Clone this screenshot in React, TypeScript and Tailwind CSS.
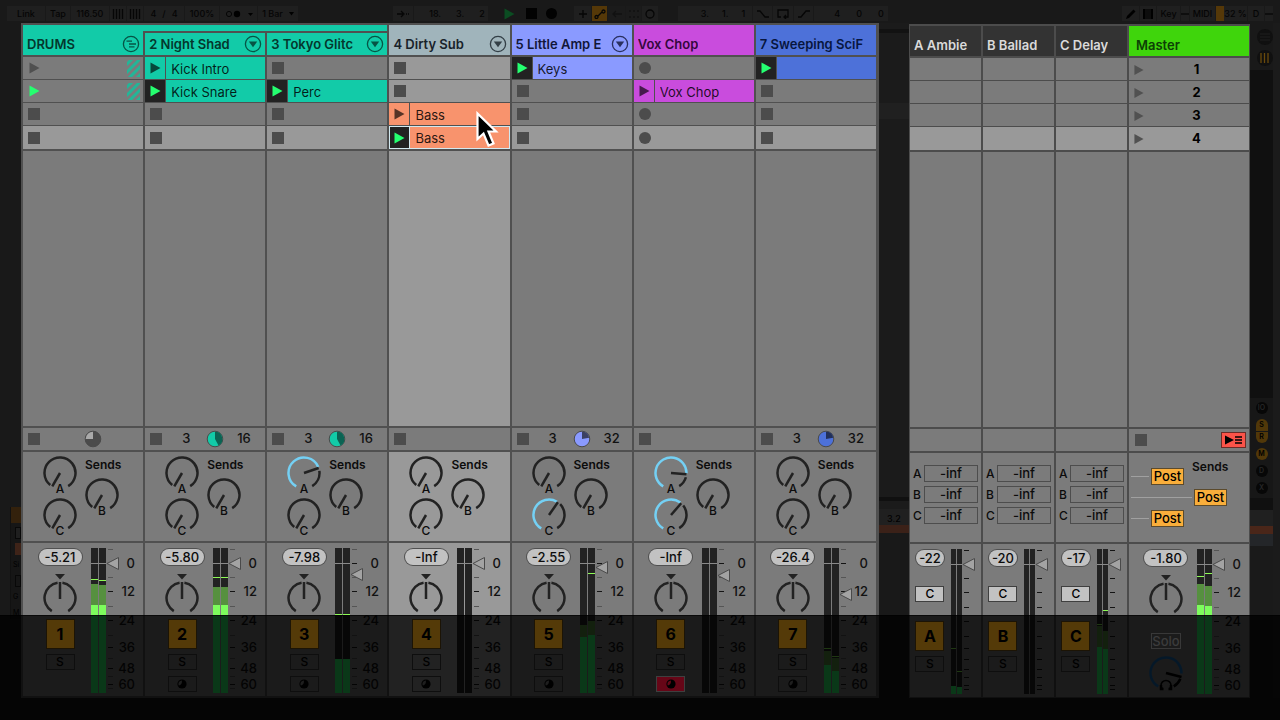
import type { ReactNode } from 'react';
import { clsx } from 'clsx';

type Bar = { peak?: number; mid?: number; main?: number };

type SlotData =
    | { kind: 'stop' }
    | { kind: 'record' }
    | { kind: 'group'; playing: boolean }
    | { kind: 'clip'; name: string; playing: boolean; selected?: boolean; hovered?: boolean };

type Track = {
    name: string;
    number: string;
    head: string;
    headText: string;
    clip: string;
    icon?: 'group' | 'fold';
    grouped?: boolean;
    active?: boolean;
    slots: SlotData[];
    pie?: { fill: string; back: string; portion: number; left?: string; right?: string };
    sends: [number, number, number];
    volume: string;
    handle: number;
    bars: [Bar, Bar];
    monitor?: 'off' | 'armed';
};

const STOP: SlotData = { kind: 'stop' };
const RECORD: SlotData = { kind: 'record' };
const MIN = -150;

const TRACKS: Track[] = [
    {
        name: 'DRUMS',
        number: '1',
        head: 'bg-[#12cba8]',
        headText: 'text-[#04372d]',
        clip: 'bg-[#12cba8]',
        icon: 'group',
        slots: [{ kind: 'group', playing: false }, { kind: 'group', playing: true }, STOP, STOP],
        pie: { fill: '#a9a9a9', back: '#4b4b4b', portion: -0.25 },
        sends: [MIN, MIN, MIN],
        volume: '-5.21',
        handle: 20,
        bars: [{ peak: 36, mid: 41, main: 62 }, { peak: 37, mid: 42, main: 62 }],
    },
    {
        name: '2 Night Shad',
        number: '2',
        head: 'bg-[#12cba8]',
        headText: 'text-[#04372d]',
        clip: 'bg-[#12cba8]',
        icon: 'fold',
        grouped: true,
        slots: [{ kind: 'clip', name: 'Kick Intro', playing: false }, { kind: 'clip', name: 'Kick Snare', playing: true }, STOP, STOP],
        pie: { fill: '#0b6353', back: '#12cba8', portion: 0.42, left: '3', right: '16' },
        sends: [MIN, MIN, MIN],
        volume: '-5.80',
        handle: 20,
        bars: [{ peak: 34, mid: 44, main: 62 }, { peak: 34, mid: 44, main: 62 }],
        monitor: 'off',
    },
    {
        name: '3 Tokyo Glitc',
        number: '3',
        head: 'bg-[#12cba8]',
        headText: 'text-[#04372d]',
        clip: 'bg-[#12cba8]',
        icon: 'fold',
        grouped: true,
        slots: [STOP, { kind: 'clip', name: 'Perc', playing: true }, STOP, STOP],
        pie: { fill: '#0b6353', back: '#12cba8', portion: 0.42, left: '3', right: '16' },
        sends: [71, MIN, MIN],
        volume: '-7.98',
        handle: 31,
        bars: [{ peak: 71, main: 116 }, { peak: 71, main: 116 }],
        monitor: 'off',
    },
    {
        name: '4 Dirty Sub',
        number: '4',
        head: 'bg-[#a0b4bb]',
        headText: 'text-[#18222a]',
        clip: 'bg-[#f8936d]',
        icon: 'fold',
        active: true,
        slots: [
            STOP,
            STOP,
            { kind: 'clip', name: 'Bass', playing: false, hovered: true },
            { kind: 'clip', name: 'Bass', playing: true, selected: true },
        ],
        sends: [MIN, MIN, MIN],
        volume: '-Inf',
        handle: 20,
        bars: [{}, {}],
        monitor: 'off',
    },
    {
        name: '5 Little Amp E',
        number: '5',
        head: 'bg-[#8a9aff]',
        headText: 'text-[#111638]',
        clip: 'bg-[#8a9aff]',
        icon: 'fold',
        slots: [{ kind: 'clip', name: 'Keys', playing: true }, STOP, STOP, STOP],
        pie: { fill: '#3c4163', back: '#8a9aff', portion: 0.22, left: '3', right: '32' },
        sends: [MIN, MIN, 35],
        volume: '-2.55',
        handle: 24,
        bars: [{ mid: 82, main: 94 }, { peak: 30, mid: 78, main: 92 }],
        monitor: 'off',
    },
    {
        name: 'Vox Chop',
        number: '6',
        head: 'bg-[#c94cdd]',
        headText: 'text-[#35083d]',
        clip: 'bg-[#c94cdd]',
        slots: [RECORD, { kind: 'clip', name: 'Vox Chop', playing: false }, RECORD, RECORD],
        sends: [95, MIN, 41],
        volume: '-Inf',
        handle: 32,
        bars: [{}, {}],
        monitor: 'armed',
    },
    {
        name: '7 Sweeping SciF',
        number: '7',
        head: 'bg-[#4d71d9]',
        headText: 'text-[#07163f]',
        clip: 'bg-[#4d71d9]',
        slots: [{ kind: 'clip', name: '', playing: true }, STOP, STOP, STOP],
        pie: { fill: '#22305a', back: '#4d71d9', portion: 0.22, left: '3', right: '32' },
        sends: [MIN, MIN, MIN],
        volume: '-26.4',
        handle: 51,
        bars: [{ peak: 105, mid: 108, main: 122 }, { peak: 113, mid: 115, main: 128 }],
        monitor: 'off',
    },
];

const RETURNS: { letter: string; name: string; volume: string; bars: [Bar, Bar] }[] = [
    { letter: 'A', name: 'A Ambie', volume: '-22', bars: [{ peak: 104, main: 142 }, { peak: 127, main: 143 }] },
    { letter: 'B', name: 'B Ballad', volume: '-20', bars: [{}, {}] },
    { letter: 'C', name: 'C Delay', volume: '-17', bars: [{ peak: 80, mid: 82, main: 103 }, { peak: 66, mid: 87, main: 105 }] },
];

const MAJOR = [
    { y: 20, label: '0' },
    { y: 48, label: '12' },
    { y: 77, label: '24' },
    { y: 104, label: '36' },
    { y: 125, label: '48' },
    { y: 141, label: '60' },
];
const MINOR = [6, 34, 63, 92, 115, 133, 145];

function point(cx: number, cy: number, r: number, deg: number) {
    const a = (deg * Math.PI) / 180;
    return `${(cx + r * Math.sin(a)).toFixed(2)} ${(cy - r * Math.cos(a)).toFixed(2)}`;
}

function arc(cx: number, cy: number, r: number, from: number, to: number) {
    return `M${point(cx, cy, r, from)}A${r} ${r} 0 ${to - from > 180 ? 1 : 0} 1 ${point(cx, cy, r, to)}`;
}

function Play({ className }: { className?: string }) {
    return (
        <svg width="11" height="12" viewBox="0 0 11 12" className={className} aria-hidden="true">
            <path d="M0.5 0.5L10.5 6L0.5 11.5Z" fill="currentColor" />
        </svg>
    );
}

function SendKnob({ letter, angle, owner }: { letter: string; angle: number; owner: string }) {
    const min = angle === MIN;
    return (
        <label className="relative block h-[42px] w-[34px]">
            <svg width="34" height="42" viewBox="0 0 34 42" fill="none" strokeWidth="2.5">
                {!min && <path d={arc(17, 17, 15.5, MIN, angle - 4)} stroke="#74d0f4" />}
                <path d={arc(17, 17, 15.5, min ? -141 : angle + 11, 148)} stroke="#222" />
                <path d={`M17 17L${point(17, 17, 15.5, angle)}`} stroke="#222" />
                <text x="17" y="37" textAnchor="middle" fontSize="12" fontWeight="500" fill="#0c0c0c">{letter}</text>
            </svg>
            <input type="range" min={-150} max={150} defaultValue={angle} aria-label={`${owner} send ${letter}`} className="absolute inset-0 h-full w-full opacity-0" />
        </label>
    );
}

function PanKnob({ owner }: { owner: string }) {
    return (
        <label className="relative mt-1.5 block h-11 w-[34px]">
            <svg width="34" height="44" viewBox="0 0 34 44" fill="none" strokeWidth="2.5">
                <path d="M12 3H22L17 8.5Z" fill="#222" />
                <path d={arc(17, 27, 15.5, -148, -9)} stroke="#222" />
                <path d={arc(17, 27, 15.5, 9, 148)} stroke="#222" />
                <path d="M17 28V11" stroke="#222" />
            </svg>
            <input type="range" min={-50} max={50} defaultValue={0} aria-label={`${owner} pan`} className="absolute inset-0 h-full w-full opacity-0" />
        </label>
    );
}

function Meter({ bars, handle, narrow = false }: { bars: [Bar, Bar]; handle: number; narrow?: boolean }) {
    const w = narrow ? 5 : 7;
    const edge = narrow ? 12 : 16;
    return (
        <svg width={narrow ? 26 : 46} height="153" viewBox={`0 0 ${narrow ? 26 : 46} 153`} className="shrink-0">
            {bars.map((bar, i) => {
                const x = i * (w + 1);
                return (
                    <g key={i}>
                        <rect x={x} y="5" width={w} height="145" fill="#222" />
                        {bar.mid && <rect x={x} y={bar.mid} width={w} height={150 - bar.mid} fill="#56903f" />}
                        {bar.main && <rect x={x} y={bar.main} width={w} height={150 - bar.main} fill="#30ff70" />}
                        {bar.main && bar.main < 72 && <rect x={x} y={bar.main} width={w} height={72 - bar.main} fill="#7dfd5d" />}
                        {bar.peak && <rect x={x} y={bar.peak} width={w} height="1" fill="#8dfb55" />}
                    </g>
                );
            })}
            <rect x="0" y="20" width={edge - 1} height="1" fill="#8a8a8a" />
            {MINOR.map((y) => (
                <rect key={y} x={edge + 1} y={y} width="5" height="1" fill={narrow ? '#141414' : '#555'} />
            ))}
            {MAJOR.map((t) => (
                <g key={t.y}>
                    <rect x={edge + 1} y={t.y} width="5" height="1" fill="#141414" />
                    {!narrow && (
                        <text x="44" y={t.y + 5} textAnchor="end" fontSize="13" fontWeight="500" fill="#111">{t.label}</text>
                    )}
                </g>
            ))}
            <path d={`M${edge} ${handle + 0.5}L${edge + 11.5} ${handle - 5.5}V${handle + 6.5}Z`} fill="#a3a3a3" stroke="#4a4a4a" />
        </svg>
    );
}

function Slot({ slot, track, lit }: { slot: SlotData; track: Track; lit: boolean }) {
    const bg = lit ? 'bg-[#999]' : 'bg-[#7b7b7b]';
    if (slot.kind === 'clip') {
        return (
            <div className={clsx('relative flex h-full w-full gap-px', slot.selected && 'border border-[#d2e9f0] bg-[#d2e9f0]')}>
                <button
                    aria-label={`Launch ${slot.name || track.name}`}
                    className={clsx('flex h-full items-center', slot.selected ? 'w-[19px] pl-1' : 'w-5 pl-[5px]', slot.playing ? 'bg-[#222] text-[#25ff70]' : `${track.clip} text-black/65`)}
                >
                    <Play />
                </button>
                <button className={clsx('flex h-full min-w-0 flex-1 items-center pt-px pl-[5px] text-[13px] leading-5 text-black/85', track.clip)}>
                    <span className="truncate">{slot.name}</span>
                </button>
                {slot.hovered && (
                    <svg width="24" height="38" viewBox="0 0 24 38" className="absolute top-2 left-[86px] z-10" aria-hidden="true">
                        <path d="M2.5 2.5V28L8.5 22.5L13.5 34.5L18.5 32.5L13.5 20.5H21Z" fill="#000" stroke="#fff" strokeWidth="2.2" />
                    </svg>
                )}
            </div>
        );
    }
    return (
        <button
            aria-label={slot.kind === 'group' ? 'Launch group' : slot.kind === 'record' ? 'Record' : 'Stop'}
            className={clsx('flex h-full w-full items-center pl-[5px]', bg)}
        >
            {slot.kind === 'stop' && <span className="h-3 w-3 bg-[#4c4c4c]" />}
            {slot.kind === 'record' && <span className="h-3 w-3 rounded-full bg-[#4c4c4c]" />}
            {slot.kind === 'group' && (
                <>
                    {slot.playing ? <Play className="ml-px text-[#25ff70]" /> : <Play className="ml-px text-[#505050]" />}
                    <svg width="13" height="17" viewBox="0 0 13 17" className="mr-[3px] ml-auto" aria-hidden="true">
                        <path d="M-2 6L6 -2M-2 14L14 -2M-2 22L16 4M-2 30L16 12" stroke="#22b698" strokeWidth="3" />
                    </svg>
                </>
            )}
        </button>
    );
}

function HeaderIcon({ kind }: { kind: 'group' | 'fold' }) {
    return (
        <svg width="18" height="18" viewBox="0 0 18 18" fill="none" stroke="currentColor" strokeWidth="1.3" className="opacity-80">
            <circle cx="9" cy="9" r="7.6" />
            {kind === 'group' ? (
                <path d="M4.5 6.2H10M7 9H14M7 11.8H12.5" />
            ) : (
                <path d="M4.8 6.5H13.2L9 12.3Z" fill="currentColor" stroke="none" />
            )}
        </svg>
    );
}

function Pie({ fill, back, portion }: { fill: string; back: string; portion: number }) {
    const [from, to] = portion < 0 ? [portion * 360, 0] : [0, portion * 360];
    return (
        <svg width="18" height="18" viewBox="0 0 18 18" aria-hidden="true">
            <circle cx="9" cy="9" r="7.8" fill={back} stroke="#4a4a4a" />
            <path d={`${arc(9, 9, 7.3, from, to)}L9 9Z`} fill={fill} />
        </svg>
    );
}

function Volume({ value, owner, small = false }: { value: string; owner: string; small?: boolean }) {
    return (
        <input
            aria-label={`${owner} volume`}
            defaultValue={value}
            className={clsx('mt-1.5 h-4 rounded-full bg-[#c2c2c2] pt-px text-center text-[13px] font-medium text-[#0c0c0c] ring-1 ring-[#505050]', small ? 'w-7' : 'w-[43px]')}
        />
    );
}

function SmallButton({ children, label, className }: { children: ReactNode; label: string; className?: string }) {
    return (
        <button aria-label={label} className={clsx('flex h-4 w-[29px] items-center justify-center border border-[#3f3f3f] text-xs font-medium text-black', className)}>
            {children}
        </button>
    );
}

// stays above the dimmed strip so the activators remain readable
function Activator({ children, className }: { children: ReactNode; className?: string }) {
    return (
        <button className={clsx('relative z-30 h-[30px] w-[29px] border border-[#1c1405] bg-[#543a08] text-base font-bold text-black', className)}>{children}</button>
    );
}

function TrackColumn({ track }: { track: Track }) {
    const cell = track.active ? 'bg-[#999]' : 'bg-[#7b7b7b]';
    return (
        <section className="flex min-w-0 flex-col gap-0.5">
            <div className="flex h-[30px] flex-col gap-0.5">
                {track.grouped && <div className="-ml-0.5 h-1.5 shrink-0 bg-[#12cba8]" />}
                <header className={clsx('flex min-h-0 flex-1 items-center justify-between pr-[3px] pl-1', track.head, track.headText, !track.grouped && 'pt-2')}>
                    <h2 className="min-w-0 truncate pt-0.5 text-[13px] font-semibold">{track.name}</h2>
                    {track.icon && (
                        <button aria-label={`Unfold ${track.name}`} className="shrink-0">
                            <HeaderIcon kind={track.icon} />
                        </button>
                    )}
                </header>
            </div>
            <ul className="flex flex-col gap-px">
                {track.slots.map((slot, i) => (
                    <li key={i} className={i === 3 ? 'h-[23px]' : 'h-[22px]'}>
                        <Slot slot={slot} track={track} lit={i === 3 || !!track.active} />
                    </li>
                ))}
            </ul>
            <div className={clsx('min-h-24 flex-1', cell)} />
            <div className="flex h-[22px] items-center bg-[#7b7b7b] pl-[5px] text-[13px] font-medium text-[#111]">
                <button aria-label={`Stop ${track.name}`} className="h-3 w-3 bg-[#4c4c4c]" />
                <span className="w-[44px] pl-5">{track.pie?.left}</span>
                {track.pie && <Pie {...track.pie} />}
                <span className="flex-1 pl-[13px]">{track.pie?.right}</span>
            </div>
            <div className={clsx('flex h-[89px] gap-2 pt-1 pl-5', cell)}>
                <div>
                    <SendKnob letter="A" angle={track.sends[0]} owner={track.name} />
                    <SendKnob letter="C" angle={track.sends[2]} owner={track.name} />
                </div>
                <div>
                    <h3 className="h-[22px] text-xs leading-[18px] font-semibold text-[#0c0c0c]">Sends</h3>
                    <SendKnob letter="B" angle={track.sends[1]} owner={track.name} />
                </div>
            </div>
            <div className={clsx('flex h-[153px] gap-[9px] pl-[15px]', cell)}>
                <div className="flex w-11 flex-col items-center">
                    <Volume value={track.volume} owner={track.name} />
                    <PanKnob owner={track.name} />
                    <Activator className="mt-1">{track.number}</Activator>
                    <SmallButton label={`Solo ${track.name}`} className="mt-[5px]">S</SmallButton>
                    {track.monitor && (
                        <SmallButton label={`Arm ${track.name}`} className={clsx('mt-1.5', track.monitor === 'armed' && 'relative z-30 border-[#1c0508] bg-[#660617]')}>
                            <svg width="10" height="10" viewBox="0 0 10 10">
                                <circle cx="5" cy="5" r="4.6" fill="#000" />
                                <path d="M5 1.5A3.5 3.5 0 0 0 1.8 6.5Q5 6 5 1.5Z" fill={track.monitor === 'armed' ? '#660617' : '#8a8a8a'} />
                            </svg>
                        </SmallButton>
                    )}
                </div>
                <Meter bars={track.bars} handle={track.handle} />
            </div>
        </section>
    );
}

function ReturnColumn({ letter, name, volume, bars }: (typeof RETURNS)[number]) {
    return (
        <section className="flex min-w-0 flex-col gap-0.5">
            <header className="flex h-[30px] items-center bg-[#333] pt-2.5 pl-1">
                <h2 className="truncate text-[13px] font-semibold text-[#dadada]">{name}</h2>
            </header>
            <ul className="flex flex-col gap-px">
                {[0, 1, 2, 3].map((i) => (
                    <li key={i} className={i === 3 ? 'h-[23px] bg-[#999]' : 'h-[22px] bg-[#7b7b7b]'} />
                ))}
            </ul>
            <div className="min-h-24 flex-1 bg-[#7b7b7b]" />
            <div className="h-[22px] bg-[#7b7b7b]" />
            <div className="flex h-[89px] flex-col gap-1 bg-[#7b7b7b] pt-3 pr-[3px] pl-[3px]">
                {['A', 'B', 'C'].map((send) => (
                    <label key={send} className="flex h-[17px] items-center justify-between text-xs font-medium text-[#0c0c0c]">
                        {send}
                        <input defaultValue="-inf" className="h-[17px] w-[54px] border border-[#4d4d4d] text-center text-[13px]" />
                    </label>
                ))}
            </div>
            <div className="flex h-[153px] gap-[7px] bg-[#7b7b7b] pl-1.5">
                <div className="flex w-7 flex-col items-center">
                    <Volume value={volume} owner={name} small />
                    <SmallButton label={`Crossfade ${name}`} className="mt-5 bg-[#c2c2c2]">C</SmallButton>
                    <Activator className="mt-[19px]">{letter}</Activator>
                    <SmallButton label={`Solo ${name}`} className="mt-[5px]">S</SmallButton>
                </div>
                <Meter bars={bars} handle={20} narrow />
            </div>
        </section>
    );
}

function Post() {
    return <button className="h-[17px] w-[33px] border border-[#5b4a2c] bg-[#f9ae3b] text-[13px] leading-none font-medium text-black">Post</button>;
}

function MasterColumn() {
    return (
        <section className="flex min-w-0 flex-col gap-0.5">
            <header className="flex h-[30px] items-center bg-[#3fd50c] pt-2.5 pl-[7px]">
                <h2 className="text-[13px] font-semibold text-[#0c4005]">Master</h2>
            </header>
            <ul className="flex flex-col gap-px">
                {[1, 2, 3, 4].map((scene) => (
                    <li key={scene} className={scene === 4 ? 'h-[23px] bg-[#999]' : 'h-[22px] bg-[#7b7b7b]'}>
                        <button className="flex h-full w-full items-center pt-px pl-[5px] text-[13px] font-bold text-black">
                            <Play className="text-[#515151]" />
                            <span className="w-[116px] text-center">{scene}</span>
                        </button>
                    </li>
                ))}
            </ul>
            <div className="min-h-24 flex-1 bg-[#7b7b7b]" />
            <div className="flex h-[22px] items-center justify-between bg-[#7b7b7b] pr-[3px] pl-1.5">
                <button aria-label="Stop all clips" className="h-3 w-3 bg-[#4c4c4c]" />
                <button aria-label="Back to arrangement" className="flex h-4 w-[25px] items-center justify-center border border-[#6c2a26] bg-[#fb5349]">
                    <svg width="18" height="10" viewBox="0 0 18 10">
                        <path d="M0 0.5L9 5L0 9.5Z" />
                        <path d="M10 2H17M10 5H17M10 8H17" stroke="#000" strokeWidth="1.4" />
                    </svg>
                </button>
            </div>
            <div className="flex h-[89px] flex-col gap-1 bg-[#7b7b7b] pt-[15px] pl-0.5">
                <div className="flex h-[17px] items-center gap-0.5">
                    <span className="h-px w-[18px] bg-[#a0a0a0]" />
                    <Post />
                    <h3 className="-mt-5 ml-1.5 text-xs font-semibold text-[#0c0c0c]">Sends</h3>
                </div>
                <div className="flex h-[17px] items-center gap-0.5">
                    <span className="h-px w-[61px] bg-[#a0a0a0]" />
                    <Post />
                </div>
                <div className="flex h-[17px] items-center gap-0.5">
                    <span className="h-px w-[18px] bg-[#a0a0a0]" />
                    <Post />
                </div>
            </div>
            <div className="flex h-[153px] gap-[9px] bg-[#7b7b7b] pl-[15px]">
                <div className="flex w-11 flex-col items-center">
                    <Volume value="-1.80" owner="Master" />
                    <PanKnob owner="Master" />
                    <button className="relative z-30 mt-[17px] h-4 w-[30px] border border-[#383838] text-[13px] leading-none font-medium text-[#3c3c3c]">Solo</button>
                    <label className="relative mt-1.5 block">
                        <svg width="34" height="38" viewBox="0 0 34 38" fill="none" strokeWidth="2.5">
                            <path d={arc(17, 18, 15.5, -150, 92)} stroke="#1a6fb8" />
                            <path d={arc(17, 18, 15.5, 112, 150)} stroke="#000" />
                            <path d="M17 18L32.5 22" stroke="#000" />
                            <path d="M13.5 34A5 5 0 1 1 20.5 34" stroke="#000" strokeWidth="1.6" />
                            <path d="M12 30V34H14.5M22 30V34H19.5" stroke="#000" />
                        </svg>
                        <input type="range" aria-label="Cue volume" className="absolute inset-0 h-full w-full opacity-0" />
                    </label>
                </div>
                <Meter bars={[{ peak: 32, mid: 40, main: 61 }, { peak: 29, mid: 42, main: 62 }]} handle={20} />
            </div>
        </section>
    );
}

function Tool({ children, className, label }: { children: ReactNode; className?: string; label?: string }) {
    return (
        <button aria-label={label} className={clsx('flex h-[15px] shrink-0 items-center justify-center bg-[#1f1f1f]', className)}>
            {children}
        </button>
    );
}

function Glyph({ d, w = 12 }: { d: string; w?: number }) {
    return (
        <svg width={w} height="10" viewBox={`0 0 ${w} 10`} fill="none" stroke="#060606" strokeWidth="1.3">
            <path d={d} />
        </svg>
    );
}

function Toolbar() {
    return (
        <nav className="flex h-[23px] shrink-0 items-start pt-1.5 pr-[7px] pl-[7px] text-[9px] font-medium text-[#050505]">
            <div className="flex gap-px">
                <Tool className="w-[38px]">Link</Tool>
                <Tool className="w-6">Tap</Tool>
                <Tool className="w-[38px]">116.50</Tool>
                <Tool className="w-4" label="Nudge down"><Glyph d="M1.5 0V10M4.5 0V10M7.5 0V10M10.5 0V10" /></Tool>
                <Tool className="w-4" label="Nudge up"><Glyph d="M1.5 0V10M4.5 0V10M7.5 0V10M10.5 0V10" /></Tool>
                <Tool className="w-[40px] gap-1.5"><span>4</span><span>/</span><span>4</span></Tool>
                <Tool className="w-[34px]">100%</Tool>
                <Tool className="w-[37px] gap-1" label="Metronome">
                    <svg width="28" height="8" viewBox="0 0 28 8">
                        <circle cx="4" cy="4" r="2.6" fill="none" stroke="#050505" />
                        <circle cx="12" cy="4" r="3.2" />
                        <path d="M23 3H28L25.500 6Z" />
                    </svg>
                </Tool>
                <Tool className="w-[40px] gap-1.5">
                    1 Bar
                    <svg width="5" height="4" viewBox="0 0 5 4"><path d="M0 0H5L2.500 3.500Z" /></svg>
                </Tool>
            </div>
            <div className="ml-[95px] flex gap-px">
                <Tool className="w-5" label="Follow"><Glyph d="M0 5H6M4 2L7 5L4 8M9 5H10M11 5H12" /></Tool>
                <Tool className="w-[74px] gap-[15px] pl-3"><span>18.</span><span>3.</span><span>2</span></Tool>
            </div>
            <div className="ml-4 flex h-[15px] items-center gap-[9px]">
                <button aria-label="Play"><Play className="text-[#0b4d22]" /></button>
                <button aria-label="Stop" className="ml-0.5 h-[11px] w-[11px] bg-[#020202]" />
                <button aria-label="Record" className="h-[11px] w-[11px] rounded-full bg-[#020202]" />
            </div>
            <div className="ml-[17px] flex gap-px">
                <Tool className="w-[17px]" label="Overdub"><Glyph d="M2 5H10M6 1V9" /></Tool>
                <Tool className="w-[15px] bg-[#553808]" label="Automation arm"><Glyph d="M1 8A1.500 1.500 0 1 0 4 8A1.500 1.500 0 1 0 1 8M4 7L8 3M8 2.500A1.500 1.500 0 1 0 11 2.500A1.500 1.500 0 1 0 8 2.500" /></Tool>
                <Tool className="w-[17px] opacity-40" label="Re-enable automation"><Glyph d="M11 5H2M5 2L2 5L5 8" /></Tool>
                <Tool className="w-[15px] opacity-40" label="Capture"><Glyph d="M1 2H3M5 2H7M9 2H11M1 8H3M5 8H7M9 8H11" /></Tool>
                <Tool className="w-4" label="Session record"><Glyph d="M2 5A4 4 0 1 0 10 5A4 4 0 1 0 2 5" /></Tool>
            </div>
            <div className="ml-5 flex gap-px">
                <Tool className="w-[74px] gap-[13px] pl-4"><span>3.</span><span>1.</span><span>1</span></Tool>
                <Tool className="w-[19px]" label="Punch in"><Glyph d="M0 2H3L8 8H12" /></Tool>
                <Tool className="w-5" label="Loop"><Glyph d="M4 8H1V1H11V8H7M9 6L7 8L9 10" /></Tool>
                <Tool className="w-[19px]" label="Punch out"><Glyph d="M0 8H3L8 2H12" /></Tool>
                <Tool className="w-[74px] gap-4 pl-4"><span>4</span><span>0</span><span>0</span></Tool>
            </div>
            <div className="ml-auto flex gap-px">
                <Tool className="w-[17px]" label="Draw mode">
                    <svg width="10" height="10" viewBox="0 0 10 10"><path d="M0 10L1 7L7.500 0.500L9.500 2.500L3 9Z" /></svg>
                </Tool>
                <Tool className="w-4" label="Computer MIDI keyboard">
                    <svg width="10" height="10" viewBox="0 0 10 10"><path d="M0 0H10V10H0Z" /><path d="M3 0V6M7 0V6M3 6V10M7 6V10M5 0V10" stroke="#222" strokeWidth="0.8" /></svg>
                </Tool>
                <Tool className="w-[23px]">Key</Tool>
                <Tool className="w-2" label="Key activity"><Glyph d="M0 5H8" w={8} /></Tool>
                <Tool className="w-[25px]">MIDI</Tool>
                <Tool className="w-[31px] border-l-8 border-[#553808] whitespace-nowrap">32 %</Tool>
                <Tool className="w-4">D</Tool>
                <Tool className="w-2" label="Disk activity"><Glyph d="M0 5H8" w={8} /></Tool>
            </div>
        </nav>
    );
}

function DeviceEdge() {
    return (
        <aside className="flex w-[21px] shrink-0 flex-col items-end justify-end pb-[79px] text-[7px] text-black">
            <div className="flex w-[11px] flex-col gap-1 border-l border-[#111] bg-[#161616]">
                <span className="h-4 bg-[#33210c]" />
                <span className="ml-1 h-3 border border-[#080808] bg-[#1f1f1f]" />
                <span className="ml-1 h-3 bg-[#3e2318]" />
                <span className="ml-0.5 leading-3">Si</span>
                <span className="ml-1 h-3 border border-[#080808]" />
                <span className="ml-0.5 leading-3">G</span>
                <span className="ml-0.5 leading-3">M</span>
            </div>
        </aside>
    );
}

function MiddleEdge() {
    return (
        <aside className="flex w-[30px] shrink-0 flex-col bg-[#1b1b1b] text-[9px] text-black">
            <div className="mt-1.5 h-1 bg-[#121212]" />
            <div className="mt-[70px] h-4 bg-[#202020]" />
            <div className="flex-1" />
            <div className="h-1 bg-[#101010]" />
            <div className="mt-2 h-4 bg-[#202020] pl-2 leading-[20px] font-medium">3.2</div>
            <div className="h-2 bg-[#3b2118]" />
            <div className="h-[82px] bg-[#191919]" />
            <div className="h-[83px] bg-[#1a1a1a]" />
        </aside>
    );
}

function ViewSelector() {
    return (
        <aside className="flex w-[30px] shrink-0 flex-col items-center border-r-[7px] border-[#1b1b1b] bg-[#101010] text-[7px] font-semibold text-black">
            <div className="flex w-full flex-col items-center gap-[5px] bg-[#191919] pt-1.5 pb-1 pl-1.5">
                <button aria-label="Arrangement view" className="flex h-4 w-4 items-center justify-center rounded-full bg-[#101010]">
                    <svg width="10" height="8" viewBox="0 0 10 8" stroke="#1f1f1f"><path d="M0 1H10M0 4H10M0 7H10" /></svg>
                </button>
                <button aria-label="Session view" className="flex h-4 w-4 items-center justify-center rounded-full bg-[#101010]">
                    <svg width="9" height="10" viewBox="0 0 9 10" stroke="#6a4a0c" strokeWidth="1.3"><path d="M1 0V10M4.500 0V10M8 0V10" /></svg>
                </button>
            </div>
            <div className="flex-1" />
            <div className="flex w-full flex-col items-center gap-[5px] bg-[#171717] pt-1 pb-1">
                <button className="h-3 w-3 rounded-full bg-[#070707] text-[#262626]">IO</button>
                <div className="flex flex-col">
                    <button className="h-3 w-3 rounded-t-full bg-[#513809]">S</button>
                    <button className="h-3 w-3 rounded-b-full border-t border-[#171717] bg-[#513809]">R</button>
                </div>
                <button className="h-3 w-3 rounded-full bg-[#513809]">M</button>
                <button className="h-3 w-3 rounded-full bg-[#070707] text-[#262626]">D</button>
                <button className="h-3 w-3 rounded-full bg-[#070707] text-[#262626]">X</button>
            </div>
            <div className="mt-3 h-4 w-full bg-[#202020]" />
            <div className="h-2 w-full bg-[#4a2619]" />
            <div className="h-3 w-full bg-[#242629]" />
            <div className="h-[152px] w-full bg-[#1a1a1a]" />
        </aside>
    );
}

export default function App() {
    return (
        <div className="relative flex min-h-screen flex-col overflow-hidden bg-[#191919] font-[Inter,'Liberation_Sans',sans-serif]">
            <Toolbar />
            <main className="flex flex-1 pb-[22px]">
                <DeviceEdge />
                <div className="grid min-w-0 flex-[858] grid-cols-7 gap-0.5 bg-[#505050] pt-0.5 pr-[3px] pb-0.5 pl-0.5">
                    {TRACKS.map((track) => (
                        <TrackColumn key={track.name} track={track} />
                    ))}
                </div>
                <MiddleEdge />
                <div className="mt-px grid min-w-0 flex-[341] grid-cols-[71fr_71fr_71fr_120fr] gap-0.5 bg-[#4c4c4c] px-px pt-0.5 pb-px">
                    {RETURNS.map((ret) => (
                        <ReturnColumn key={ret.letter} {...ret} />
                    ))}
                    <MasterColumn />
                </div>
                <ViewSelector />
            </main>
            <div className="pointer-events-none absolute inset-x-0 bottom-0 z-20 h-[105px] border-t border-black/60 bg-black/78" />
        </div>
    );
}
